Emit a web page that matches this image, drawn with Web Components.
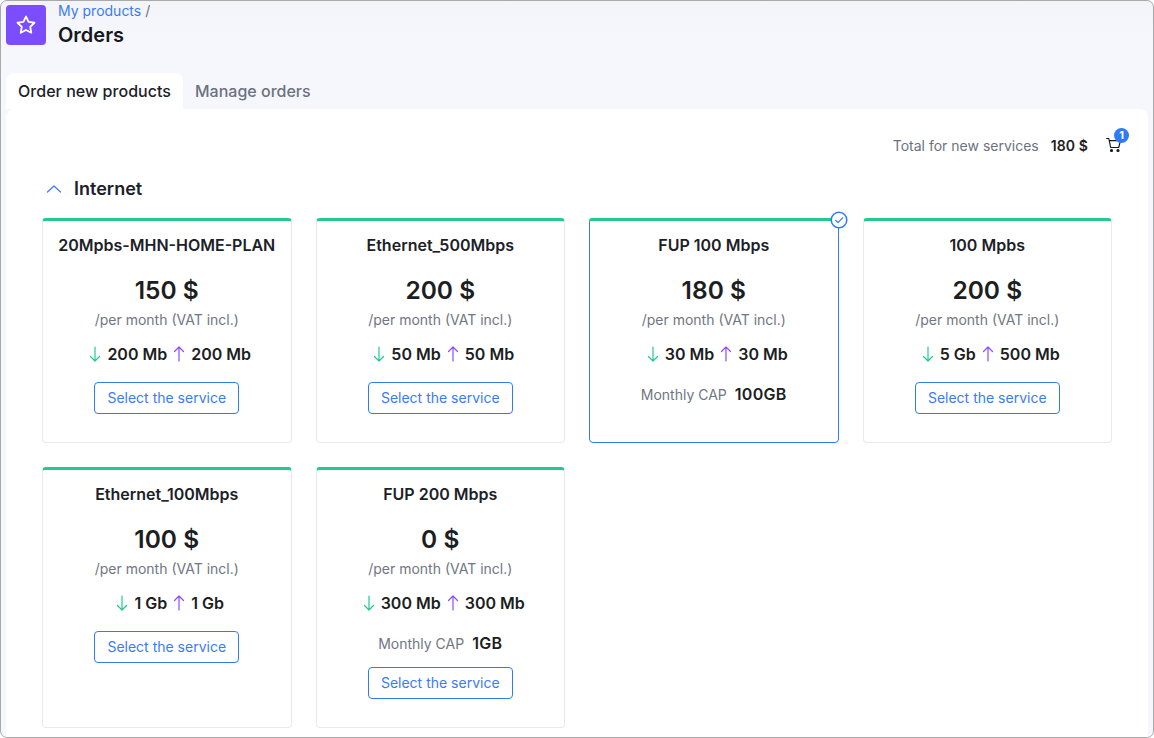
<!DOCTYPE html>
<html><head><meta charset="utf-8">
<style>
html,body{margin:0;padding:0;height:100%;overflow:hidden;background:#fff}
body{font-family:Inter,"Liberation Sans",sans-serif;color:#1c1e21}
</style></head><body>
<order-app>
  <page-head></page-head>
  <tab-bar></tab-bar>
  <order-panel>
    <total-bar></total-bar>
    <section-title>Internet</section-title>
    <plan-grid>
      <plan-card name="20Mpbs-MHN-HOME-PLAN" price="150 $" down="200 Mb" up="200 Mb"></plan-card>
      <plan-card name="Ethernet_500Mbps" price="200 $" down="50 Mb" up="50 Mb"></plan-card>
      <plan-card name="FUP 100 Mbps" price="180 $" down="30 Mb" up="30 Mb" cap="100GB" selected></plan-card>
      <plan-card name="100 Mpbs" price="200 $" down="5 Gb" up="500 Mb"></plan-card>
      <plan-card name="Ethernet_100Mbps" price="100 $" down="1 Gb" up="1 Gb"></plan-card>
      <plan-card name="FUP 200 Mbps" price="0 $" down="300 Mb" up="300 Mb" cap="1GB"></plan-card>
    </plan-grid>
  </order-panel>
</order-app>
<script>
function def(name, html){
  customElements.define(name, class extends HTMLElement{
    constructor(){super();this.attachShadow({mode:'open'});}
    connectedCallback(){this.shadowRoot.innerHTML=typeof html==='function'?html(this):html;}
  });
}
def('order-app',`<style>
:host{display:flex;flex-direction:column;box-sizing:border-box;width:1154px;height:738px;border:1px solid #a9a9a9;border-radius:7px;overflow:hidden;background:linear-gradient(#f3f4f8 0,#f6f7fc 40px,#f6f7fc 100%);padding:4px 5px 0}
</style><slot></slot>`);
def('page-head',`<style>
:host{display:flex;gap:12px;height:68px;flex:none}
.ic{width:40px;height:40px;background:#7c4dff;border-radius:4px;display:flex;align-items:center;justify-content:center}
.crumb{font-size:14px;line-height:14px;color:#3b7bf6;margin-top:-1px}
.crumb span{color:#6b7280}
h1{margin:5px 0 0;font-size:20px;line-height:24px;font-weight:600;color:#16181c}
</style>
<div class="ic"><svg width="22" height="22" viewBox="0 0 24 24" fill="none" stroke="#fff" stroke-width="2" stroke-linejoin="round"><path d="M12 2.800l2.850 5.800 6.400.930-4.630 4.500 1.100 6.370L12 17.400l-5.720 3 1.100-6.370-4.630-4.500 6.400-.930z"/></svg></div>
<div><div class="crumb">My products <span>/</span></div><h1>Orders</h1></div>`);
def('tab-bar',`<style>
:host{display:flex;height:36px;flex:none;font-size:16px;font-weight:500}
div{padding:0 12px;line-height:37px;border-radius:8px 8px 0 0;color:#6b7280}
.on{background:#fff;color:#1c2128;letter-spacing:.04px}
</style><div class="on">Order new products</div><div>Manage orders</div>`);
def('order-panel',`<style>
:host{display:block;flex:1;background:#fff;border-radius:8px 8px 0 0;padding:0 36px;width:1142px;box-sizing:border-box;min-height:0}
</style><slot></slot>`);
def('total-bar',`<style>
:host{display:flex;justify-content:flex-end;align-items:center;height:72px;box-sizing:border-box;margin-right:-10px;font-size:14px;color:#6b7280}
b{font-weight:600;color:#1c1e21;margin-left:12px;letter-spacing:.1px}
.cart{position:relative;margin-left:18px;width:16px;height:16px;display:block}
.badge{position:absolute;left:8px;top:-9px;width:15px;height:15px;border-radius:50%;background:#2f7bf5;color:#fff;font-size:11px;line-height:15px;text-align:center;font-weight:700}
svg{display:block}
.wrap{display:flex;align-items:center}
</style><div class="wrap"><span>Total for new services</span><b>180 $</b><span class="cart"><svg width="16" height="16" viewBox="0 0 16 16" fill="none" stroke="#16181c" stroke-width="1.200" stroke-linecap="round" stroke-linejoin="round"><path d="M.6 1.500h2.200l1.900 9h8l1.800-6.800H3.300"/><circle cx="5.500" cy="13.500" r="1" fill="#16181c"/><circle cx="12" cy="13.500" r="1" fill="#16181c"/></svg><span class="badge">1</span></span></div>`);
def('section-title',`<style>
:host{display:flex;align-items:center;gap:12px;font-size:18px;font-weight:600;color:#1c2128;box-sizing:border-box;padding-left:4px;margin-top:-10px;height:36px;line-height:36px}
svg{display:block}
</style><svg width="16" height="16" viewBox="0 0 16 16" fill="none" stroke="#3b7bf6" stroke-width="1.200" stroke-linecap="round" stroke-linejoin="round"><path d="M1.500 11L8 5l6.500 6"/></svg><slot></slot>`);
def('plan-grid',`<style>
:host{display:grid;grid-template-columns:repeat(4,249.5px);column-gap:24px;row-gap:24px;margin-top:11px;grid-auto-rows:min-content}
</style><slot></slot>`);
def('plan-card',h=>{
const a=n=>h.getAttribute(n);
const sel=h.hasAttribute('selected');
const cap=a('cap');
return `<style>
:host{display:flex;flex-direction:column;align-items:center;box-sizing:border-box;position:relative;background:#fff;border:1px solid #e7e9ee;border-radius:4px;border-top:3px solid #23c98f;min-height:225px;padding-bottom:28px}
:host([selected]){border:1px solid #2f7bf5;padding-top:2px}
:host([selected])::before{content:"";position:absolute;left:-1px;right:-1px;top:-1px;height:3px;background:#23c98f;border-radius:3px 3px 0 0}
.t{font-size:16px;font-weight:600;line-height:20px;margin-top:14px;color:#1c2128}
.p{font-size:24.5px;font-weight:600;line-height:30px;margin-top:20px;color:#1c1e21}
.s{font-size:14px;line-height:20px;margin-top:5px;color:#71767f}
.sp{display:flex;align-items:center;font-size:16px;font-weight:600;line-height:20px;margin-top:14px;padding-left:6px;color:#1c1e21}
.sp svg{display:block;margin:0 5px 0 0}
.sp span{margin-right:5px}.sp span:last-child{margin-right:0}
.cap{display:flex;align-items:center;height:20px;margin-top:20px;font-size:14px;color:#71767f}
.cap b{font-size:16px;font-weight:600;color:#1c1e21;margin-left:8px;letter-spacing:.3px}
button{font:inherit;font-size:14px;font-weight:400;color:#3b7bf6;background:#fff;border:1px solid #2f7bf5;border-radius:4px;width:145px;height:32px;padding:0 0 1px;margin-top:18px}
.cap + button{margin-top:14px}
.chk{position:absolute;right:-10.500px;top:-8.500px;width:18px;height:18px;display:block}
</style>
${sel?`<svg class="chk" viewBox="0 0 18 18" fill="#fff" stroke="#2f7bf5" stroke-linecap="round" stroke-linejoin="round"><circle cx="9" cy="9" r="7.800" stroke-width="1.500"/><path d="M5.600 9.300l2.400 2.300 4.600-4.800" fill="none" stroke-width="1.200"/></svg>`:''}
<div class="t">${a('name')}</div>
<div class="p">${a('price')}</div>
<div class="s">/per month (VAT incl.)</div>
<div class="sp"><svg width="14" height="18" viewBox="0 0 14 18" fill="none" stroke="#23c98f" stroke-width="1.200" stroke-linecap="round" stroke-linejoin="round"><path d="M7 2v14M2.500 11.500L7 16l4.500-4.500"/></svg><span>${a('down')}</span><svg width="14" height="18" viewBox="0 0 14 18" fill="none" stroke="#8a4dff" stroke-width="1.200" stroke-linecap="round" stroke-linejoin="round"><path d="M7 16V2M2.500 6.500L7 2l4.500 4.500"/></svg><span>${a('up')}</span></div>
${cap?`<div class="cap">Monthly CAP<b>${cap}</b></div>`:''}
${sel?'':`<button>Select the service</button>`}`;
});
</script>
</body></html>
